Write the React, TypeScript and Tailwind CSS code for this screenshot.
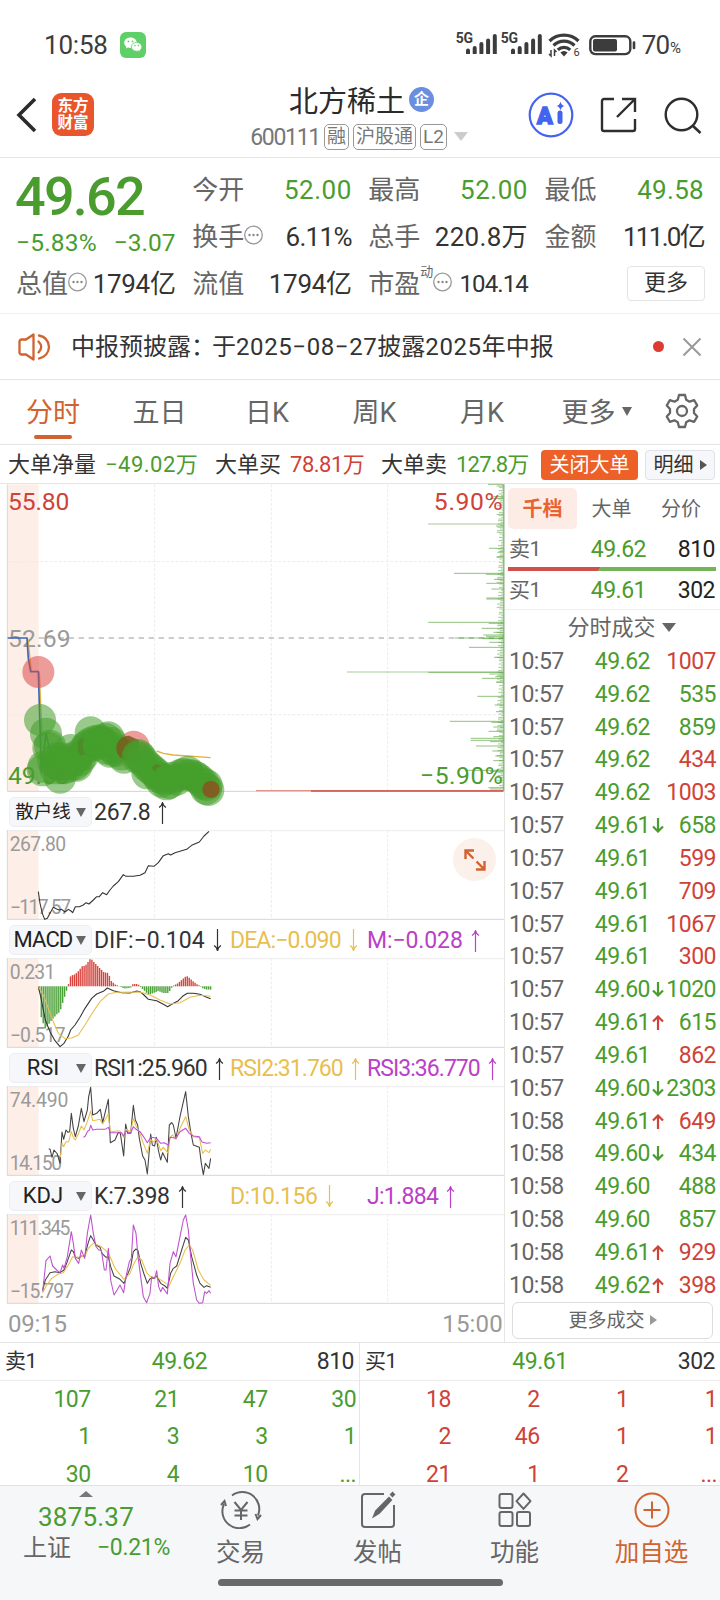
import React from 'react';

const GREEN = '#4a9c2f';
const RED = '#cf4238';

const trades: [string, string, string, number, boolean][] = [
  // time, price, direction, volume, is buy
  ['10:57', '49.62', '', 1007, true],
  ['10:57', '49.62', '', 535, false],
  ['10:57', '49.62', '', 859, false],
  ['10:57', '49.62', '', 434, true],
  ['10:57', '49.62', '', 1003, true],
  ['10:57', '49.61', 'down', 658, false],
  ['10:57', '49.61', '', 599, true],
  ['10:57', '49.61', '', 709, true],
  ['10:57', '49.61', '', 1067, true],
  ['10:57', '49.61', '', 300, true],
  ['10:57', '49.60', 'down', 1020, false],
  ['10:57', '49.61', 'up', 615, false],
  ['10:57', '49.61', '', 862, true],
  ['10:57', '49.60', 'down', 2303, false],
  ['10:58', '49.61', 'up', 649, true],
  ['10:58', '49.60', 'down', 434, false],
  ['10:58', '49.60', '', 488, false],
  ['10:58', '49.60', '', 857, false],
  ['10:58', '49.61', 'up', 929, true],
  ['10:58', '49.62', 'up', 398, true],
];

const sellQueue = [
  ['107', '21', '47', '30'],
  ['1', '3', '3', '1'],
  ['30', '4', '10', '...'],
];

const buyQueue = [
  ['18', '2', '1', '1'],
  ['2', '46', '1', '1'],
  ['21', '1', '2', '...'],
];

// Chart coordinates use three units per pixel
const blobs = [
  [120, 735], [138, 776], [150, 812], [145, 818], [130, 875], [128, 886], [160, 860], [165, 880], [180, 908],
  [175, 870], [190, 880], [185, 850], [200, 860], [205, 875], [212, 825], [215, 860], [225, 868], [230, 872],
  [240, 855], [235, 840], [250, 840], [258, 818], [272, 772], [270, 805], [280, 812], [290, 802], [300, 796],
  [310, 802], [318, 792], [325, 787], [335, 804], [322, 822], [330, 830], [345, 828], [372, 848], [365, 838],
  [170, 850], [180, 865], [195, 868], [220, 850], [262, 812], [285, 798], [305, 805], [340, 820],
];

const laterBlobs = [
  [415, 840], [420, 845], [412, 848], [430, 858], [440, 872], [442, 895], [450, 880], [460, 888], [470, 897], [475, 906],
  [490, 912], [485, 920], [500, 928], [508, 924], [515, 908], [530, 914], [540, 900], [550, 897], [563, 890],
  [567, 900], [580, 902], [590, 908], [600, 916], [610, 926], [620, 930], [625, 945], [618, 942],
];

const volumes = [
  [28, 46], [33, 20], [65, 30], [70, 40], [118, 20], [153, 22], [220, 43], [230, 14], [245, 20], [295, 148], [298, 52],
  [313, 28], [325, 51], [342, 36], [369, 51], [372, 51], [442, 225], [445, 44], [460, 65], [472, 30], [480, 60],
  [484, 52], [489, 146], [491, 62], [502, 42], [517, 103], [547, 28], [592, 225], [597, 42], [605, 24], [610, 64],
  [621, 22], [664, 78], [690, 26], [710, 22], [739, 161], [742, 36], [756, 30], [769, 44], [785, 30], [790, 98],
  [796, 98], [800, 40], [813, 82], [828, 33], [843, 24], [857, 30], [886, 115], [889, 40], [938, 45], [942, 40],
];

const macdShape = [
  [118, 12], [124, 95], [136, 128], [150, 108], [160, 96], [170, 84], [180, 76], [188, 50], [202, 6], [206, -8],
  [212, -32], [225, -36], [236, -46], [246, -60], [256, -62], [266, -76], [272, -84], [284, -70], [298, -56],
  [312, -42], [325, -40], [334, -16], [345, -6], [358, -1], [366, 4], [376, 7], [392, 4], [399, -7], [414, -7],
  [420, 1], [430, 10], [446, 26], [460, 20], [475, 14], [490, 20], [506, 20], [514, 6], [520, -2], [532, -8],
  [546, -20], [560, -32], [574, -20], [588, -8], [600, -2], [606, 5], [616, 9], [634, 10],
];

const macdAt = (x: number) => {
  const i = macdShape.findIndex((p) => p[0] >= x);
  if (i <= 0) return macdShape[0][1];
  const [x0, y0] = macdShape[i - 1];
  const [x1, y1] = macdShape[i];
  return y0 + ((y1 - y0) * (x - x0)) / (x1 - x0);
};

const macdBars = Array.from({ length: 89 }, (_, i) => {
  const x = 118 + i * 5.84;
  return { x, v: macdAt(x) };
});

const Caret = ({ className = '', w = 10, h = 9 }: { className?: string; w?: number; h?: number }) => (
  <svg width={w} height={h} viewBox="0 0 10 9" preserveAspectRatio="none" className={className}>
    <path d="M0 0h10L5 9z" fill="currentColor" />
  </svg>
);

const CaretRight = ({ className = '' }: { className?: string }) => (
  <svg width="7" height="10" viewBox="0 0 7 10" className={className}>
    <path d="M0 0l7 5-7 5z" fill="currentColor" />
  </svg>
);

const Dots = () => (
  <svg width="19" height="20" viewBox="0 0 19 20" className="shrink-0 mt-[-3px]">
    <circle cx="9.5" cy="10" r="8.8" fill="none" stroke="#999" strokeWidth="1.3" />
    <circle cx="5.5" cy="10" r="1.2" fill="#888" />
    <circle cx="9.5" cy="10" r="1.2" fill="#888" />
    <circle cx="13.5" cy="10" r="1.2" fill="#888" />
  </svg>
);

const Signal = () => (
  <div className="flex">
    <span className="mt-[-4px] text-[14px] leading-[14px] font-bold tracking-[-0.3px] w-[10px] whitespace-nowrap">5G</span>
    <svg width="31" height="20" viewBox="0 0 31 20" className="mt-[-1px]">
      <path d="M2 19v-2.5M8.7 19v-5M15.4 19v-9M22.1 19V6.5M28.8 19V2" stroke="#3c3c3c" strokeWidth="4" strokeLinecap="round" />
    </svg>
  </div>
);

const StatusBar = () => (
  <div className="h-[80px] pl-[44px] pr-[39px] pt-[32px] flex items-start text-[#3c3c3c]">
    <span className="w-[64px] text-[26px] leading-[26px] tracking-[-0.2px]">10:58</span>
    <svg width="26" height="26" viewBox="0 0 26 26" className="ml-[12px]">
      <rect width="26" height="26" rx="6" fill="#5fd068" />
      <path d="M10.5 5.5c-3.6 0-6.3 2.3-6.3 5.2 0 1.6.8 3 2.2 4l-.5 1.9 2.2-1.1c.8.2 1.6.4 2.4.4 3.500 0 6.300-2.400 6.300-5.200s-2.800-5.200-6.300-5.200z" fill="#fff" />
      <path d="M16.600 10.400c-3 0-5.300 2-5.300 4.400s2.300 4.400 5.300 4.400c.7 0 1.300-.1 1.900-.3l1.800.9-.4-1.500c1.200-.8 2-2 2-3.500 0-2.400-2.400-4.400-5.300-4.400z" fill="#fff" stroke="#5fd068" strokeWidth=".8" />
      <g fill="#5fd068"><circle cx="8.400" cy="9.400" r=".9" /><circle cx="12.500" cy="9.400" r=".9" /><circle cx="14.900" cy="13.600" r=".8" /><circle cx="18.400" cy="13.600" r=".8" /></g>
    </svg>
    <div className="ml-auto flex items-start pt-[3px]">
      <Signal />
      <div className="w-[4px]" />
      <Signal />
      <svg width="33" height="26" viewBox="0 0 33 26" className="ml-[6px] mt-[-2px] overflow-visible">
        <g fill="none" stroke="#3c3c3c" strokeWidth="3.200">
          <path d="M1.500 8a21 21 0 0 1 29 0" />
          <path d="M5.500 12.500a15 15 0 0 1 21 0" />
          <path d="M9.800 16.800a9 9 0 0 1 12.400 0" />
        </g>
        <path d="M16 23.500l-3.600-4a5 5 0 0 1 7.200 0z" fill="#3c3c3c" />
        <path d="M3 17v6l-2-2M6.500 23v-6l2 2" stroke="#3c3c3c" strokeWidth="1.500" fill="none" />
        <text x="25.500" y="23" fontSize="11" fill="#3c3c3c">6</text>
      </svg>
      <svg width="48" height="21" viewBox="0 0 48 21" className="ml-[8px]">
        <rect x="1.300" y="1.300" width="40" height="17.800" rx="5" fill="none" stroke="#3c3c3c" strokeWidth="2.400" />
        <rect x="4" y="4" width="24" height="12.500" rx="2" fill="#3c3c3c" />
        <path d="M45 7.500v5.500" stroke="#3c3c3c" strokeWidth="2.600" strokeLinecap="round" />
      </svg>
      <span className="ml-[5px] mt-[-3px] text-[26px] leading-[26px] tracking-[-1px]">70</span>
      <span className="mt-[6px] ml-[1px] text-[15px] leading-[15px]">%</span>
    </div>
  </div>
);

const Tag = ({ children }: { children: React.ReactNode }) => (
  <span className="h-[26px] px-[2px] flex items-center rounded-[5px] border border-[#999] text-[19px] leading-none text-[#777] whitespace-nowrap">
    {children}
  </span>
);

const Header = () => (
  <div className="h-[78px] border-b border-[#e6e6e6] flex items-start justify-between pl-[16px] pr-[18px]">
    <div className="w-[210px] flex items-center pt-[13px]">
      <svg width="21" height="36" viewBox="0 0 21 36">
        <path d="M19 2L3 18l16 16" fill="none" stroke="#2b2b2b" strokeWidth="3.600" />
      </svg>
      <div className="ml-[15px] w-[42px] h-[43px] rounded-[9px] bg-[#ea562b] flex flex-col items-center justify-center text-white text-[15.500px] leading-[17px] font-bold">
        <span>东方</span>
        <span>财富</span>
      </div>
    </div>
    <div className="flex flex-col items-center">
      <div className="flex items-center h-[41px] ml-[5px]">
        <span className="mt-[3px] text-[29px] leading-none text-[#2b2b2b]">北方稀土</span>
        <span className="ml-[4px] mt-[-2px] w-[25px] h-[25px] rounded-full bg-[#6b8fe0] text-white text-[15px] leading-none font-bold flex items-center justify-center">企</span>
      </div>
      <div className="flex items-center gap-[4px] h-[31px]">
        <span className="mt-[2px] text-[23px] leading-none tracking-[-1.300px] text-[#777]">600111</span>
        <Tag>融</Tag>
        <Tag>沪股通</Tag>
        <Tag>L2</Tag>
        <Caret w={14} h={9} className="ml-[3px] text-[#ccc]" />
      </div>
    </div>
    <div className="w-[210px] flex items-center justify-end pt-[12px]">
      <svg width="46" height="46" viewBox="0 0 46 46">
        <circle cx="23" cy="23" r="21.300" fill="none" stroke="#4464ee" strokeWidth="2.200" />
        <text x="9" y="31.500" fontSize="23" fontWeight="900" fill="#4464ee" stroke="#4464ee" strokeWidth="1.500">A</text>
        <path d="M32 21v8.500" stroke="#4464ee" strokeWidth="5" strokeLinecap="round" />
        <path d="M32.500 9.500q.8 3.800 4 4.500-3.200.8-4 4.500-.8-3.700-4-4.500 3.200-.7 4-4.500z" fill="#4464ee" />
      </svg>
      <svg width="37" height="36" viewBox="0 0 37 36" className="ml-[26px]">
        <path d="M14 2H4a2 2 0 0 0-2 2v28a2 2 0 0 0 2 2h29a2 2 0 0 0 2-2V22" fill="none" stroke="#2e2e2e" strokeWidth="2.400" />
        <path d="M22 2h13v13M35 2L17 20" fill="none" stroke="#2e2e2e" strokeWidth="2.400" />
      </svg>
      <svg width="38" height="37" viewBox="0 0 38 37" className="ml-[27px]">
        <circle cx="17.500" cy="17.500" r="15.800" fill="none" stroke="#2e2e2e" strokeWidth="2.400" />
        <path d="M28.500 28.500l8 7.500" stroke="#2e2e2e" strokeWidth="2.600" />
      </svg>
    </div>
  </div>
);

const Stat = ({ label, value, dots, className = 'tracking-[0.500px] text-[#4a9c2f]' }: { label: string; value: string; dots?: boolean; className?: string }) => (
  <div className="h-[47px] flex items-center justify-between whitespace-nowrap">
    <span className="flex items-center text-[26px] leading-none text-[#666]">
      {label}
      {dots && <Dots />}
    </span>
    <span className={`text-[26px] leading-none ${className}`}>{value}</span>
  </div>
);

const Quote = () => (
  <div className="h-[156px] border-b border-[#f0f0f0] pl-[16px] pr-[16px] pt-[8px] grid grid-cols-4 gap-x-[16.500px] content-start">
    <div>
      <div className="h-[94px] text-[#4a9c2f] whitespace-nowrap">
        <div className="pt-[6px] text-[54px] leading-[50px] font-medium tracking-[-1.800px] ml-[-1px]">49.62</div>
        <div className="pt-[9px] flex justify-between text-[24.500px] leading-[24px]">
          <span className="tracking-[0.200px]">−5.83%</span>
          <span>−3.07</span>
        </div>
      </div>
      <div className="h-[47px] flex items-center justify-between whitespace-nowrap leading-none">
        <span className="flex items-center text-[26px] text-[#666]">总值<Dots /></span>
        <span className="text-[26px] tracking-[-0.300px] text-[#333]">1794亿</span>
      </div>
    </div>
    <div>
      <Stat label="今开" value="52.00" />
      <Stat label="换手" value="6.11%" dots className="tracking-[-0.700px] text-[#333]" />
      <Stat label="流值" value="1794亿" className="tracking-[-0.300px] text-[#333]" />
    </div>
    <div>
      <Stat label="最高" value="52.00" />
      <Stat label="总手" value="220.8万" className="tracking-[0.300px] text-[#333]" />
      <div className="h-[47px] flex items-center justify-between whitespace-nowrap leading-none">
        <span className="flex items-center text-[26px] text-[#666]">
          市盈
          <span className="self-start mt-[-6px] text-[13px]">动</span>
          <Dots />
        </span>
        <span className="text-[24px] tracking-[-0.900px] text-[#333]">104.14</span>
      </div>
    </div>
    <div>
      <Stat label="最低" value="49.58" className="tracking-[0.300px] text-[#4a9c2f]" />
      <Stat label="金额" value="111.0亿" className="tracking-[-1.700px] text-[#333]" />
      <div className="h-[47px] flex items-center justify-end">
        <button className="w-[78px] h-[35px] mr-[-1px] mt-[-1px] rounded-[4px] border border-[#e4e4e4] text-[22px] leading-none text-[#333]">更多</button>
      </div>
    </div>
  </div>
);

const Notice = () => (
  <div className="h-[66px] border-b border-[#e6e6e6] pl-[18px] pr-[18px] flex items-center">
    <svg width="33" height="28" viewBox="0 0 33 28">
      <g fill="none" stroke="#d0632f" strokeWidth="2.300" strokeLinecap="round" strokeLinejoin="round">
        <path d="M15.500 1.500v25L8 21.500H3.500a2 2 0 0 1-2-2v-11a2 2 0 0 1 2-2H8z" />
        <path d="M20.500 8.500q5.500 5.500 0 11M21 2.500q9.500 2 10 11.500-.5 9-10 11.500" />
      </g>
    </svg>
    <span className="ml-[20px] text-[24px] leading-none text-[#333] whitespace-nowrap">
      中报预披露<span className="tracking-[-3px]">：</span>于<span className="tracking-[0.600px]">2025−08−27</span>披露<span className="tracking-[0.600px]">2025</span>年中报
    </span>
    <span className="ml-auto w-[11px] h-[11px] rounded-full bg-[#dd3b30]" />
    <svg width="20" height="20" viewBox="0 0 20 20" className="ml-[18px]">
      <path d="M1.500 1.500l17 17M18.500 1.500l-17 17" stroke="#999" strokeWidth="2" />
    </svg>
  </div>
);

const Tabs = () => (
  <div className="h-[65px] border-b border-[#e6e6e6] flex text-[27px] leading-none text-[#666]">
    <div className="w-[106px] h-full flex flex-col items-center text-[#d0632f]">
      <span className="pt-[20px]">分时</span>
      <span className="mt-auto mb-[5px] w-[38px] h-[4px] rounded-full bg-[#d0632f]" />
    </div>
    <div className="w-[107px] pt-[20px] text-center">五日</div>
    <div className="w-[108px] pt-[20px] text-center">日K</div>
    <div className="w-[107px] pt-[20px] text-center">周K</div>
    <div className="w-[108px] pt-[20px] text-center">月K</div>
    <div className="w-[121px] pt-[20px] flex justify-center">
      更多
      <Caret className="mt-[7px] ml-[6px]" />
    </div>
    <svg width="36" height="36" viewBox="0 0 36 36" className="mt-[13px] ml-[7px]">
      <g fill="none" stroke="#666" strokeWidth="2.300" strokeLinejoin="round">
        <path d="M15 2h6l1.200 4.800 3.300 1.900 4.700-1.500 3 5.200-3.200 3.600v4l3.200 3.600-3 5.200-4.700-1.500-3.300 1.900L21 34h-6l-1.200-4.800-3.300-1.900-4.700 1.500-3-5.200L6 20v-4l-3.200-3.600 3-5.200 4.700 1.500 3.300-1.900z" />
        <circle cx="18" cy="18" r="5" />
      </g>
    </svg>
  </div>
);

const BigOrders = () => (
  <div className="h-[39px] pt-px border-b border-[#e6e6e6] pl-[8px] pr-[5px] flex items-center text-[22px] leading-none text-[#333] whitespace-nowrap">
    <div className="w-[207px] flex gap-[9px]">
      <span>大单净量</span>
      <span className="tracking-[0.500px] text-[#4a9c2f]">−49.02万</span>
    </div>
    <div className="w-[166px] flex gap-[9px]">
      <span>大单买</span>
      <span className="tracking-[-0.500px] text-[#cf4238]">78.81万</span>
    </div>
    <div className="w-[160px] flex gap-[9px]">
      <span>大单卖</span>
      <span className="tracking-[-0.800px] text-[#4a9c2f]">127.8万</span>
    </div>
    <button className="w-[97px] h-[30px] rounded-[4px] bg-[#ed6128] text-[20px] leading-none text-white">关闭大单</button>
    <button className="ml-auto w-[70px] h-[30px] rounded-[4px] border border-[#dfe2e8] bg-[#f6f7fa] flex items-center justify-center text-[20px] leading-none">
      明细
      <CaretRight className="ml-[6px] text-[#555]" />
    </button>
  </div>
);

const MainChart = () => (
  <svg width="505" height="308" viewBox="0 27 1515 924" className="block overflow-visible relative z-10">
    <rect x="23" y="28" width="93" height="920" fill="#fdeee8" />
    <g stroke="#ececec" strokeWidth="3" strokeDasharray="9 5">
      <path d="M464 28v920M814 28v920M1163 28v920M23 260h1487M23 719h1487" />
    </g>
    <path d="M22 28v920" stroke="#d8d8d8" strokeWidth="3" />
    <path d="M22 949h1490" stroke="#d2d2d2" strokeWidth="3" />
    <path d="M116 489h1394" stroke="#bdbdbd" strokeWidth="5" strokeDasharray="16 14" />
    <text x="24" y="517" fontSize="74" letterSpacing="0.500" fill="#9a9a9a">52.69</text>
    <path d="M84 492l10 98M118 592l8 190M470 828l20 7 30 5 112 8" fill="none" stroke="#e0b23c" strokeWidth="4" />
    <path d="M23 489h58l4 62 7 39h23l9 300 14-115 8 35 12 60" fill="none" stroke="#3c66bd" strokeWidth="5" />
    <g stroke={GREEN}>
      {Array.from({ length: 182 }, (_, i) => (
        <path key={i} d={`M1510 ${32 + i * 5}h-${4 + ((i * 37 + (i % 7) * 23) % 17)}`} strokeWidth="3" opacity="0.5" />
      ))}
      {volumes.map(([y, len]) => (
        <path key={y} d={`M1510 ${y}h-${len}`} strokeWidth="3" opacity="0.6" />
      ))}
      <path d="M1510 147h-226M1510 591h-469" strokeWidth="5" opacity="0.32" />
      <path d="M1511 28v920" strokeWidth="4" opacity="0.6" />
    </g>
    <path d="M768 947h742" stroke="#e09490" strokeWidth="4" />
    <path d="M933 948h577" stroke="#cf5550" strokeWidth="4" />
    <circle cx="115" cy="591" r="48" fill="#dd4a45" opacity="0.55" />
    <circle cx="401" cy="815" r="48" fill="#dd4a45" opacity="0.55" />
    <g fill="#459f2b">
      {blobs.map(([x, y], i) => (
        <circle key={i} cx={x} cy={y} r="48" opacity="0.55" />
      ))}
      <path d="M387 782a38 38 0 1 0 0 76h30v-62z" fill="#7a5a1d" opacity="0.85" />
      {laterBlobs.map(([x, y], i) => (
        <circle key={i} cx={x} cy={y} r="48" opacity="0.55" />
      ))}
    </g>
    <path d="M238 792q-14 26 4 50l14-6q-14-24-2-46z" fill="#5b7424" opacity="0.4" />
    <path d="M456 880q4-14 18-12l10 8q-16-2-18 14z" fill="#5b7424" opacity="0.6" />
    <circle cx="633" cy="943" r="26" fill="#8b5220" opacity="0.85" />
    <g fontSize="74">
      <text x="24" y="104" letterSpacing="-0.500" fill={RED}>55.80</text>
      <text x="24" y="928" letterSpacing="-0.500" fill={GREEN}>49.58</text>
      <text x="1510" y="104" letterSpacing="2" textAnchor="end" fill={RED}>5.90%</text>
      <text x="1510" y="928" letterSpacing="1.500" textAnchor="end" fill={GREEN}>−5.90%</text>
    </g>
  </svg>
);

const Arrow = ({ up }: { up?: boolean }) => (
  <svg width="9" height="23" viewBox="0 0 9 23" className="shrink-0">
    {up ? (
      <path d="M4.500 1v22M1 6.500q2.800-1.500 3.500-5.500.7 4 3.500 5.500" fill="none" stroke="currentColor" strokeWidth="1.200" />
    ) : (
      <path d="M4.500 0v22M1 16.500q2.800 1.500 3.500 5.500.7-4 3.500-5.500" fill="none" stroke="currentColor" strokeWidth="1.200" />
    )}
  </svg>
);

type Item = [string, boolean, string];

const IndicatorHead = ({ name, items, nameClass = 'text-[22px]' }: { name: string; items: Item[]; nameClass?: string }) => (
  <div className="h-[38px] pt-[2px] pl-[9px] flex items-center text-[23px] leading-none whitespace-nowrap">
    <div className="w-[83px] h-[30px] rounded-[5px] border border-[#eceef2] bg-[#f6f7fa] flex items-center justify-end pr-[5px] text-[#222]">
      <span className={`grow text-center ${nameClass}`}>{name}</span>
      <Caret className="text-[#666]" />
    </div>
    <div className={`ml-[2px] w-[136px] flex items-center gap-[8px] text-[#333] ${items[0][2]}`}>
      {items[0][0]}
      <Arrow up={items[0][1]} />
    </div>
    {items[1] && (
      <div className={`w-[137px] flex items-center gap-[8px] text-[#e8bf4f] ${items[1][2]}`}>
        {items[1][0]}
        <Arrow up={items[1][1]} />
      </div>
    )}
    {items[2] && (
      <div className={`flex items-center gap-[8px] text-[#bb40c8] ${items[2][2]}`}>
        {items[2][0]}
        <Arrow up={items[2][1]} />
      </div>
    )}
  </div>
);

type SubChartProps = { top: number; max: string; min: string; maxW: number; minW: number; children: React.ReactNode };

const SubChart = ({ top, max, min, maxW, minW, children }: SubChartProps) => (
  <svg width="505" height="90" viewBox={`0 ${top} 1515 270`} className="block">
    <rect x="23" y={top} width="93" height="268" fill="#fdeee8" />
    <path d={`M464 ${top}v268M814 ${top}v268M1163 ${top}v268`} stroke="#ececec" strokeWidth="3" strokeDasharray="9 5" />
    <path d={`M22 ${top + 2}h1490`} stroke="#ececec" strokeWidth="3" />
    <path d={`M22 ${top}v268h1490`} stroke="#d6d6d6" strokeWidth="3" fill="none" />
    <g fontSize="58" fill="#9a9a9a">
      <text x="29" y={top + 62} textLength={maxW}>{max}</text>
      <text x="29" y={top + 253} textLength={minW}>{min}</text>
    </g>
    <g fill="none" strokeWidth="3.200" strokeLinejoin="round">
      {children}
    </g>
  </svg>
);

const Charts = () => (
  <div className="w-[505px] h-[859px] border-r border-[#e6e6e6] shrink-0">
    <MainChart />
    <IndicatorHead name="散户线" nameClass="text-[18.500px]" items={[['267.8', true, 'tracking-[-0.300px]']]} />
    <div className="relative">
      <SubChart top={120} max="267.80" min="−117.57" maxW={169} minW={184}>
        <polyline stroke="#333" points="115,305 120,340 127,370 134,388 142,385 150,370 160,352 170,357 178,360 185,358 195,366 205,358 213,363 218,368 226,350 238,350 250,345 258,338 267,342 280,330 290,320 298,320 308,308 320,314 330,300 340,288 355,275 370,254 378,259 400,259 420,256 435,248 445,227 462,229 475,218 490,197 505,191 512,195 525,188 545,182 560,178 575,166 598,156 612,138 627,124" />
      </SubChart>
      <div className="absolute right-[8px] top-[8px] w-[43px] h-[43px] rounded-full bg-[#fcf0ea] flex items-center justify-center">
        <svg width="22" height="22" viewBox="0 0 22 22">
          <path d="M1.500 10V1.500H10M1.500 1.500l8 8M20.500 12v8.500H12M20.500 20.500l-8-8" fill="none" stroke="#d0632f" strokeWidth="2.400" />
        </svg>
      </div>
    </div>
    <IndicatorHead
      name="MACD"
      nameClass="text-[22px] tracking-[-0.900px]"
      items={[['DIF:−0.104', false, ''], ['DEA:−0.090', false, 'tracking-[-0.900px]'], ['M:−0.028', true, 'tracking-[-0.100px]']]}
    />
    <SubChart top={504} max="0.231" min="−0.517" maxW={137} minW={168}>
      {macdBars.map(({ x, v }) => (
        <path key={x} d={`M${x} 589v${v}`} stroke={v > 0 ? '#4ba038' : '#d9433c'} strokeWidth="4.200" />
      ))}
      <polyline stroke="#333" points="115,590 122,620 130,660 136,690 150,725 165,752 180,770 192,760 205,738 212,720 225,705 240,682 255,655 265,640 275,625 290,612 310,604 322,594 340,602 365,608 390,609 410,603 420,605 432,615 445,628 470,632 490,643 503,650 515,643 535,632 550,617 562,610 580,610 600,613 620,622 632,626" />
      <polyline stroke="#e8bf4f" points="115,590 130,615 145,655 160,695 175,730 195,746 215,744 235,735 255,705 275,672 300,635 325,612 350,607 420,606 450,615 480,630 510,642 540,638 570,622 600,616 632,619" />
    </SubChart>
    <IndicatorHead
      name="RSI"
      items={[['RSI1:25.960', true, 'tracking-[-0.950px]'], ['RSI2:31.760', true, 'tracking-[-0.950px]'], ['RSI3:36.770', true, 'tracking-[-0.950px]']]}
    />
    <SubChart top={108} max="74.490" min="14.150" maxW={176} minW={157}>
      <polyline stroke="#444" points="146,297 150,297 156,322 162,300 172,312 180,340 186,246 191,268 198,240 204,247 209,245 214,190 220,235 226,260 235,228 244,175 252,215 262,180 266,140 272,112 278,195 290,190 301,178 308,218 325,148 331,278 345,270 355,247 361,250 371,318 377,222 383,250 392,250 400,166 406,210 413,225 418,265 428,318 435,330 442,372 452,252 457,285 464,288 469,262 475,300 482,330 488,308 502,337 508,225 515,218 520,225 528,264 540,200 557,125 565,200 573,250 580,285 598,292 604,340 610,374 616,340 627,355 632,325" />
      <polyline stroke="#e8bf4f" points="181,322 186,280 191,290 198,275 206,275 214,245 220,262 226,270 235,252 244,228 252,240 262,215 272,183 278,212 290,210 300,208 308,222 325,192 331,246 350,243 360,243 371,262 377,238 392,245 400,205 408,228 420,250 430,280 442,310 452,268 460,276 470,268 482,302 490,292 505,310 510,262 518,255 528,268 540,235 557,200 568,240 580,260 598,263 608,310 616,300 627,308 632,298" />
      <polyline stroke="#c050d0" points="250,262 256,258 262,245 268,240 272,226 278,240 290,238 305,238 315,238 325,232 331,248 350,248 365,248 371,258 377,243 392,250 400,230 408,238 420,245 432,262 442,278 452,262 469,264 482,280 492,278 505,285 510,262 528,265 540,245 557,235 568,250 580,258 598,260 606,276 620,280 632,278" />
    </SubChart>
    <IndicatorHead
      name="KDJ"
      items={[['K:7.398', true, 'tracking-[-0.300px]'], ['D:10.156', false, 'tracking-[-0.500px]'], ['J:1.884', true, 'tracking-[-0.700px]']]}
    />
    <SubChart top={492} max="111.345" min="−15.797" maxW={182} minW={193}>
      <polyline stroke="#444" points="128,720 136,690 150,668 165,665 180,668 192,660 200,640 207,620 214,600 220,605 226,622 236,625 244,618 254,620 264,580 272,557 280,570 288,585 300,592 306,610 318,622 325,620 332,650 342,678 360,688 372,700 380,680 392,650 400,605 408,597 414,602 422,640 432,672 442,700 450,686 465,684 470,678 482,700 495,708 502,715 512,670 520,655 530,648 545,600 557,562 565,570 575,620 590,675 600,700 612,712 620,707 632,712" />
      <polyline stroke="#e8bf4f" points="128,728 140,705 155,685 175,672 190,668 205,645 218,620 235,622 255,618 265,595 280,580 300,588 318,602 328,615 345,655 372,688 390,670 402,640 414,620 425,630 440,668 455,684 470,682 490,695 508,706 520,680 540,640 555,600 568,585 578,600 595,660 612,690 632,706" />
      <polyline stroke="#c050d0" points="128,725 138,632 150,618 158,648 170,660 180,668 188,645 192,655 202,620 214,545 220,580 226,625 236,640 244,600 254,625 262,550 272,495 280,550 288,590 296,600 304,600 313,660 318,660 325,595 332,690 342,735 350,722 360,705 371,728 378,680 388,635 394,625 400,525 408,550 414,620 422,680 430,740 440,758 450,730 455,680 464,685 470,662 476,710 482,725 488,712 502,732 510,640 520,605 528,620 540,560 550,510 557,495 565,540 572,620 580,700 590,750 598,760 608,758 614,725 620,730 627,722 632,730" />
    </SubChart>
    <div className="h-[38px] pl-[8px] pr-px pt-px flex items-center justify-between text-[24px] leading-none text-[#999]">
      <span className="tracking-[-0.200px]">09:15</span>
      <span className="tracking-[0.200px]">15:00</span>
    </div>
  </div>
);

const Level = ({ label, price, volume }: { label: string; price: string; volume: string }) => (
  <div className="h-[38px] pl-[4px] pr-[5px] flex items-center text-[23px] leading-none tracking-[-0.500px]">
    <span className="w-[60px] text-[21px] text-[#666]">{label}</span>
    <span className="w-[77px] text-right text-[#4a9c2f]">{price}</span>
    <span className="grow text-right text-[#222]">{volume}</span>
  </div>
);

const TradePanel = () => (
  <div className="grow flex flex-col">
    <div className="h-[46px] pt-[4px] pl-[3px] flex text-[20px] leading-none text-[#666]">
      <div className="w-[69px] h-[41px] rounded-[5px] bg-[#fdece5] font-bold text-[#e9632f] flex items-center justify-center">千档</div>
      <div className="w-[69px] h-[41px] pt-px flex items-center justify-center">大单</div>
      <div className="w-[70px] h-[41px] pt-px flex items-center justify-center">分价</div>
    </div>
    <Level label="卖1" price="49.62" volume="810" />
    <svg width="208" height="4" viewBox="0 0 208 4" className="ml-[3px] -mt-px block shrink-0">
      <path d="M0 0h93l-3 4H0z" fill="#d2504b" />
      <path d="M93 0h115v4H90z" fill="#74b356" />
    </svg>
    <Level label="买1" price="49.61" volume="302" />
    <div className="h-[36px] shrink-0 pl-[18px] border-t border-[#eee] flex items-center justify-center text-[22px] leading-none text-[#666]">
      分时成交
      <Caret w={14} h={9} className="ml-[6px]" />
    </div>
    {trades.map(([time, price, dir, volume, buy], i) => (
      <div key={i} className="h-[32.840px] shrink-0 pl-[4px] pr-[4px] flex items-center text-[23px] leading-none tracking-[-0.500px]">
        <span className="w-[60px] text-[#666]">{time}</span>
        <span className="w-[81px] text-right text-[#4a9c2f]">{price}</span>
        <span className="w-[15px] flex justify-center">
          {dir && (
            <svg width="12" height="15" viewBox="0 0 12 15" fill="none" strokeWidth="2.200" stroke={dir === 'up' ? RED : GREEN}>
              <path d={dir === 'up' ? 'M6 15V1.500M1 6.500l5-5 5 5' : 'M6 0v13.500M1 8.500l5 5 5-5'} />
            </svg>
          )}
        </span>
        <span className={`w-0 grow flex justify-end ${buy ? 'text-[#cf4238]' : 'text-[#4a9c2f]'}`}>{volume}</span>
      </div>
    ))}
    <button className="ml-[7px] w-[201px] h-[37px] shrink-0 rounded-[6px] border border-[#ddd] flex items-center justify-center text-[19px] leading-none text-[#666]">
      更多成交
      <CaretRight className="ml-[5px] text-[#999]" />
    </button>
  </div>
);

const Queue = ({ label, price, volume, rows, className }: { label: string; price: string; volume: string; rows: string[][]; className: string }) => (
  <div className="w-[360px] first:border-r border-[#e6e6e6]">
    <div className="h-[38px] border-b border-[#ececec] pl-[5px] pr-[5px] flex items-center text-[23px] leading-none tracking-[-0.500px] text-[#333]">
      <span className="w-[100px] text-[21px]">{label}</span>
      <span className="grow text-center text-[#4a9c2f]">{price}</span>
      <span className="w-[100px] text-right">{volume}</span>
    </div>
    <div className={`pt-[7.500px] grid grid-cols-4 gap-y-[15.500px] pl-[2px] pr-[3px] text-[23px] leading-[22px] tracking-[-0.600px] text-right ${className}`}>
      {rows.flat().map((n, i) => (
        <span key={i}>{n}</span>
      ))}
    </div>
  </div>
);

const NavItem = ({ label, children, className = 'text-[#666]' }: { label: string; children: React.ReactNode; className?: string }) => (
  <div className={`grow basis-0 flex flex-col items-center pt-[5px] text-[24.500px] leading-[24px] ${className}`}>
    <svg width="42" height="38" viewBox="0 0 42 38" fill="none" stroke="currentColor" strokeWidth="2">
      {children}
    </svg>
    <span className="mt-[12px]">{label}</span>
  </div>
);

const BottomNav = () => (
  <div className="h-[115px] border-t border-[#e2e2e2] bg-[#f6f7f9] flex flex-col items-center">
    <div className="w-full h-[93px] flex">
      <div className="w-[172px] pt-[5px] flex flex-col items-center text-[#4a9c2f]">
        <svg width="14" height="6" viewBox="0 0 14 6"><path d="M0 6l7-6 7 6z" fill="#777" /></svg>
        <span className="mt-[7px] text-[26px] leading-[26px] tracking-[0.200px]">3875.37</span>
        <div className="mt-[6px] w-full pl-[23px] pr-[2px] flex justify-between text-[23px] leading-[24px]">
          <span className="text-[24px] text-[#666]">上证</span>
          <span className="tracking-[-0.300px]">−0.21%</span>
        </div>
      </div>
      <NavItem label="交易">
        <path d="M12 4.500a17 17 0 0 1 26 20M30 33.500A17 17 0 0 1 4 13" />
        <path d="M1 14l3.500-4 1.500 5M41 24l-3.500 4-2-5" />
        <path d="M14.500 11l6.500 8 6.500-8M21 19v10M14.500 19.500h13M14.500 24.500h13" />
      </NavItem>
      <NavItem label="发帖">
        <path d="M27 3H8a3 3 0 0 0-3 3v27a3 3 0 0 0 3 3h26a3 3 0 0 0 3-3V14" />
        <path d="M17 25l2-5L32 7l2 2-12 13z" fill="currentColor" />
        <path d="M34 5l3-3" strokeWidth="4" />
      </NavItem>
      <NavItem label="功能">
        <rect x="5.500" y="3" width="13" height="14" rx="2" />
        <rect x="5.500" y="21" width="13" height="14" rx="2" />
        <rect x="23" y="21" width="13" height="14" rx="2" />
        <path d="M29.500 2.500l7 7.700-7 7.700-7-7.700z" strokeLinejoin="round" />
      </NavItem>
      <NavItem label="加自选" className="text-[#d0632f]">
        <circle cx="21" cy="19" r="16.500" />
        <path d="M21 10.500v17M12.500 19h17" />
      </NavItem>
    </div>
    <div className="w-[285px] h-[7px] rounded-full bg-[#686a6a]" />
  </div>
);

export default function App() {
  return (
    <div className="w-[720px] h-[1600px] overflow-hidden bg-white flex flex-col font-['Roboto','Noto_Sans_CJK_SC',sans-serif]">
      <StatusBar />
      <Header />
      <Quote />
      <Notice />
      <Tabs />
      <BigOrders />
      <div className="h-[859px] border-b border-[#e6e6e6] flex">
        <Charts />
        <TradePanel />
      </div>
      <div className="h-[142px] flex">
        <Queue label="卖1" price="49.62" volume="810" rows={sellQueue} className="text-[#4a9c2f]" />
        <Queue label="买1" price="49.61" volume="302" rows={buyQueue} className="text-[#cf4238]" />
      </div>
      <BottomNav />
    </div>
  );
}
